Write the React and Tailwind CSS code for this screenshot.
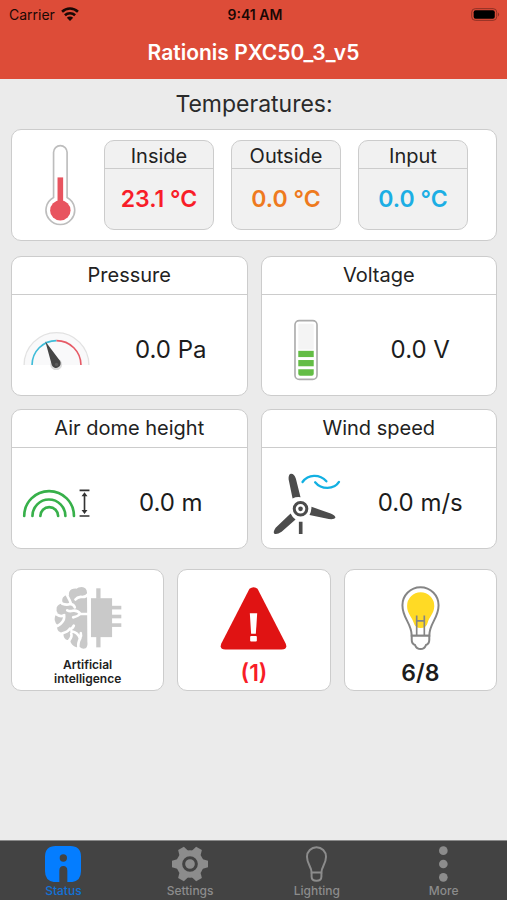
function WifiIcon() {
  return (
    <svg viewBox="0 0 56 44" className="h-[14px] w-[18px]" fill="none" stroke="#1a0805" strokeWidth="8">
      <path d="M3 15 A36 36 0 0 1 53 15" />
      <path d="M12 26 A23 23 0 0 1 44 26" />
      <path d="M28 44 L18 34 A14 14 0 0 1 38 34 Z" fill="#1a0805" stroke="none" />
    </svg>
  );
}

function BatteryStatusIcon() {
  return (
    <svg viewBox="0 0 92 40" className="h-[13px] w-[30px]">
      <rect x="2" y="2" width="77" height="36" rx="11" fill="none" stroke="#8c3024" strokeWidth="3" />
      <rect x="8" y="7" width="65" height="26" rx="6" fill="#000000" />
      <path d="M83 14 q7 6 0 12 z" fill="#8c3024" />
    </svg>
  );
}

function ThermometerIcon() {
  return (
    <svg viewBox="136 55 94 246" className="h-[82px] w-[31px] shrink-0">
      <path
        d="M162 216 V79 a20.5 20.5 0 0 1 41 0 V216 A43.5 43.5 0 1 1 162 216 Z"
        fill="#ffffff"
        stroke="#bdbdbd"
        strokeWidth="5"
      />
      <rect x="174" y="155" width="17" height="80" fill="#e8545f" />
      <circle cx="182.500" cy="255" r="31" fill="#e8545f" />
    </svg>
  );
}

function GaugeIcon() {
  return (
    <svg viewBox="68 238 202 118" className="h-[39px] w-[67px] shrink-0">
      <path d="M71 341 a98 98 0 0 1 196 0" fill="#f9f9fa" stroke="#e2e2e2" strokeWidth="4" />
      <path d="M95 341 a74 74 0 0 1 74 -74" fill="none" stroke="#3fbcd8" strokeWidth="5" />
      <path d="M169 267 a74 74 0 0 1 74 74" fill="none" stroke="#e65a66" strokeWidth="5" />
      <circle cx="168" cy="339" r="18" fill="#dcdcdc" />
      <path d="M135 269 L155 342 a14 14 0 1 0 25 -13 Z" fill="#454545" />
      <circle cx="169" cy="339" r="5" fill="#5c5c5c" />
    </svg>
  );
}

function BatteryIcon() {
  return (
    <svg viewBox="119 207 73 185" className="h-[62px] w-[24px] shrink-0">
      <rect x="122" y="210" width="67" height="179" rx="13" fill="#ffffff" stroke="#acacac" strokeWidth="5" />
      <rect x="132" y="220" width="47" height="78" rx="3" fill="#f4f4f4" />
      <rect x="132" y="302" width="47" height="19" fill="#63bd45" />
      <rect x="132" y="330" width="47" height="19" fill="#63bd45" />
      <path d="M132 358 h47 v14 q0 6 -6 6 h-35 q-6 0 -6 -6 z" fill="#63bd45" />
    </svg>
  );
}

function DomeIcon() {
  return (
    <svg viewBox="66 264 206 88" className="h-[29px] w-[69px] shrink-0" fill="none">
      <g stroke="#37b04a" strokeWidth="8" strokeLinecap="round">
        <path d="M71 346 a75.500 75.500 0 0 1 151 0" />
        <path d="M96 346 a50 50 0 0 1 100 0" />
        <path d="M120 346 a27 27 0 0 1 54 0" />
      </g>
      <g stroke="#333333" strokeWidth="5">
        <path d="M239 268 h30 M239 346 h30 M254 282 v50" />
      </g>
      <path d="M254 274 l9 12 h-18 z M254 340 l9 -12 h-18 z" fill="#333333" />
    </svg>
  );
}

function WindIcon() {
  return (
    <svg viewBox="52 212 206 190" className="h-[63px] w-[69px] shrink-0">
      <g fill="#4c4c4c">
        <path d="M113 292 L101 234 Q100 217 109 217 Q118 217 123 232 L137 288 Q124 286 113 292 Z" />
        <path d="M170 317 L228 337 Q243 344 242 350 Q240 356 222 354 L164 342 Q170 330 170 317 Z" />
        <path d="M107 337 L62 380 Q53 394 58 398 Q65 402 80 392 L122 355 Q112 348 107 337 Z" />
        <rect x="132" y="362" width="11" height="37" />
        <circle cx="137" cy="323" r="7" />
      </g>
      <circle cx="137" cy="323" r="19" fill="none" stroke="#4c4c4c" strokeWidth="9" />
      <g fill="none" stroke="#12b0e2" strokeWidth="7" strokeLinecap="round">
        <path d="M143 242 C160 219 194 217 215 240" />
        <path d="M181 243 C200 266 238 266 253 242" />
      </g>
    </svg>
  );
}

function BrainChipIcon() {
  return (
    <svg viewBox="159 76 206 194" className="h-[64px] w-[68px]">
      <g fill="#c9c9c9">
        <path d="M259 96 Q258 80 243 79 Q232 79 227 84 Q211 83 205 94 Q203 101 205 105 Q193 102 186 111 Q181 121 187 129 Q172 129 167 141 Q165 151 170 158 Q160 166 161 179 Q163 190 170 195 Q166 206 173 213 Q180 219 188 217 Q186 232 195 238 Q202 241 208 239 Q209 252 220 259 Q228 264 237 261 Q245 269 255 265 Q262 258 260 244 Z" />
        <rect x="271" y="113" width="64" height="118" />
        <rect x="287" y="83" width="13" height="32" />
        <rect x="287" y="229" width="13" height="33" />
        <rect x="333" y="136" width="30" height="11" />
        <rect x="333" y="163" width="30" height="11" />
        <rect x="333" y="189" width="30" height="11" />
      </g>
      <g fill="none" stroke="#ffffff" strokeWidth="8" strokeLinecap="round" strokeLinejoin="round">
        <path d="M262 101 Q256 111 240 109 Q229 110 224 117" />
        <path d="M199 105 Q207 119 211 131 M184 130 Q200 135 207 130 Q219 131 222 141" />
        <path d="M262 161 H239 Q231 149 216 151 Q207 154 199 150 M237 162 Q229 169 217 171" />
        <path d="M167 162 Q180 171 190 164 M190 169 Q190 185 170 197" />
        <path d="M185 219 Q201 215 207 205 M205 208 Q214 207 219 196" />
        <path d="M205 241 Q215 229 211 220 M212 213 Q231 216 238 235 Q243 228 240 219" />
        <path d="M238 236 Q231 247 233 265" />
      </g>
    </svg>
  );
}

function AlarmIcon() {
  return (
    <svg viewBox="0 0 200 190" className="h-[64px] w-[67px]">
      <path
        d="M88 8 Q100 -2 112 8 L196 171 Q203 188 184 189 H16 Q-3 188 4 171 Z"
        fill="#e01313"
      />
      <path d="M89 81 H111 L107 142 H93 Z" fill="#ffffff" />
      <rect x="90" y="149" width="20" height="16" rx="3" fill="#ffffff" />
    </svg>
  );
}

function BulbIcon() {
  return (
    <svg viewBox="438 76 117 193" className="h-[64px] w-[39px]">
      <path
        d="M470 226 C470 188 442 174 442 134 A54.500 54.500 0 0 1 551 134 C551 174 523 188 523 226 Z"
        fill="#ffffff"
        stroke="#858585"
        strokeWidth="6"
      />
      <path d="M476 187 C472 170 456 160 456 136 A41 41 0 0 1 538 136 C538 160 521 170 518 187 Q514 203 497 203 Q480 203 476 187 Z" fill="#ffda25" />
      <path d="M485 226 V165 M508 226 V165 M485 181 H508" fill="none" stroke="#858585" strokeWidth="5" />
      <path
        d="M470 226 H523 V238 Q523 250 513 254 Q508 266 497 266 Q485 266 480 254 Q470 250 470 238 Z"
        fill="#ffffff"
        stroke="#858585"
        strokeWidth="6"
      />
    </svg>
  );
}

function StatusTabIcon() {
  return (
    <svg viewBox="0 0 108 108" className="size-[36px]">
      <path
        d="M32 0 H76 Q108 0 108 32 V76 Q108 104 82 108 H67 V74 Q67 60 55 60 Q43 60 43 74 V108 H26 Q0 104 0 76 V32 Q0 0 32 0 Z"
        fill="#047dff"
      />
      <circle cx="55" cy="36" r="11" fill="#434343" />
    </svg>
  );
}

function SettingsTabIcon() {
  return (
    <svg viewBox="-54 -54 108 108" className="size-[36px]">
      <g fill="#8c8c8c">
        <circle r="41" />
        <path d="M-15 -36 L-10 -54 H10 L15 -36 V36 L10 54 H-10 L-15 36 Z" transform="rotate(30)" />
        <path d="M-15 -36 L-10 -54 H10 L15 -36 V36 L10 54 H-10 L-15 36 Z" transform="rotate(90)" />
        <path d="M-15 -36 L-10 -54 H10 L15 -36 V36 L10 54 H-10 L-15 36 Z" transform="rotate(150)" />
      </g>
      <circle r="19" fill="#8c8c8c" stroke="#434343" strokeWidth="9" />
    </svg>
  );
}

function LightingTabIcon() {
  return (
    <svg viewBox="0 0 64 108" className="h-[36px] w-[21px]" fill="none" stroke="#8c8c8c" strokeWidth="6">
      <path d="M17 80 C17 62 3 54 3 32 A29 29 0 0 1 61 32 C61 54 47 62 47 80 Z" />
      <path d="M17 80 V92 Q17 105 32 105 Q47 105 47 92 V80" />
    </svg>
  );
}

function MoreTabIcon() {
  return (
    <svg viewBox="0 0 27 108" className="h-[36px] w-[9px]" fill="#8c8c8c">
      <circle cx="13" cy="14" r="13" />
      <circle cx="13" cy="54" r="13" />
      <circle cx="13" cy="94" r="13" />
    </svg>
  );
}

const temperatures = [
  { label: "Inside", value: "23.1 °C", color: "text-[#f81d28]" },
  { label: "Outside", value: "0.0 °C", color: "text-[#ee7a1e]" },
  { label: "Input", value: "0.0 °C", color: "text-[#1caee4]" },
];

const measurements = [
  { label: "Pressure", value: "0.0 Pa", Icon: GaugeIcon },
  { label: "Voltage", value: "0.0 V", Icon: BatteryIcon },
  { label: "Air dome height", value: "0.0 m", Icon: DomeIcon },
  { label: "Wind speed", value: "0.0 m/s", Icon: WindIcon },
];

const tabs = [
  { label: "Status", Icon: StatusTabIcon, color: "text-[#1272d6]", current: true },
  { label: "Settings", Icon: SettingsTabIcon, color: "text-[#8c8c8c]" },
  { label: "Lighting", Icon: LightingTabIcon, color: "text-[#8c8c8c]" },
  { label: "More", Icon: MoreTabIcon, color: "text-[#8c8c8c]" },
];

const cardClass = "rounded-[10px] border border-[#cccccc] bg-white";

function TemperatureBox({ label, value, color }) {
  return (
    <div className="flex flex-1 flex-col rounded-[10px] border border-[#cccccc] bg-[#f1f1f1] text-center">
      <h3 className="border-b border-[#cccccc] pt-1 text-[20px] leading-[23px] text-[#222222]">{label}</h3>
      <p className={`flex flex-1 items-center justify-center text-[23px] font-semibold ${color}`}>{value}</p>
    </div>
  );
}

function MeasurementCard({ label, value, Icon }) {
  return (
    <section className={`flex h-[140px] flex-col ${cardClass}`}>
      <h2 className="border-b border-[#cccccc] text-center text-[20px] leading-[37px] text-[#222222]">{label}</h2>
      <div className="flex flex-1 items-center gap-2.5 pt-2.5 pr-1.5 pl-2.5">
        <div className="flex w-[69px] shrink-0 justify-center">
          <Icon />
        </div>
        <p className="flex-1 text-center text-[24px] text-[#1c1c1c]">{value}</p>
      </div>
    </section>
  );
}

export default function App() {
  return (
    <div className="flex min-h-screen flex-col bg-[#ebebeb] font-['Inter','Liberation_Sans',sans-serif]">
      <header className="bg-[#dd4c38] pb-3 text-[#1a0805]">
        <div className="grid h-7 grid-cols-3 items-center pr-1.5 pl-[9px] text-[14px]">
          <div className="flex items-center gap-1.5">
            <span>Carrier</span>
            <WifiIcon />
          </div>
          <time className="text-center font-semibold">9:41 AM</time>
          <div className="flex justify-end">
            <BatteryStatusIcon />
          </div>
        </div>
        <h1 className="pt-2.5 text-center text-[21px] leading-[29px] font-semibold text-white">
          Rationis PXC50_3_v5
        </h1>
      </header>

      <main className="flex-1 pr-2.5 pl-[11px]">
        <h2 className="pt-2.5 text-center text-[23px] leading-[30px] text-[#2a2a2a]">Temperatures:</h2>

        <section className={`mt-2.5 flex h-[112px] py-2.5 pr-7 ${cardClass}`}>
          <div className="flex w-[92px] shrink-0 items-center pl-[33px]">
            <ThermometerIcon />
          </div>
          <div className="flex flex-1 gap-[17px]">
            {temperatures.map((item) => (
              <TemperatureBox key={item.label} {...item} />
            ))}
          </div>
        </section>

        <div className="mt-[15px] grid grid-cols-2 gap-[13px]">
          {measurements.map((item) => (
            <MeasurementCard key={item.label} {...item} />
          ))}
        </div>

        <div className="mt-5 grid grid-cols-3 gap-[13px]">
          <button type="button" className={`flex h-[122px] flex-col items-center pt-4 ${cardClass}`}>
            <BrainChipIcon />
            <span className="pt-2 text-[12px] leading-[14px] font-semibold text-[#222222]">
              Artificial
              <br />
              intelligence
            </span>
          </button>
          <button type="button" aria-label="Alarms (1)" className={`flex h-[122px] flex-col items-center pt-4 ${cardClass}`}>
            <AlarmIcon />
            <span className="pt-2 text-[23px] leading-[30px] font-semibold text-[#f81d28]">(1)</span>
          </button>
          <button type="button" aria-label="Lights 6/8" className={`flex h-[122px] flex-col items-center pt-4 ${cardClass}`}>
            <BulbIcon />
            <span className="pt-2 text-[23px] leading-[30px] font-semibold text-[#1c1c1c]">6/8</span>
          </button>
        </div>
      </main>

      <nav className="grid grid-cols-4 border-t border-[#8a8a8a] bg-[#434343]">
        {tabs.map(({ label, Icon, color, current }) => (
          <a
            key={label}
            href="#"
            aria-current={current ? "page" : undefined}
            className={`flex flex-col items-center pt-[5px] pb-px text-[12px] leading-[17px] font-medium ${color}`}
          >
            <Icon />
            {label}
          </a>
        ))}
      </nav>
    </div>
  );
}
